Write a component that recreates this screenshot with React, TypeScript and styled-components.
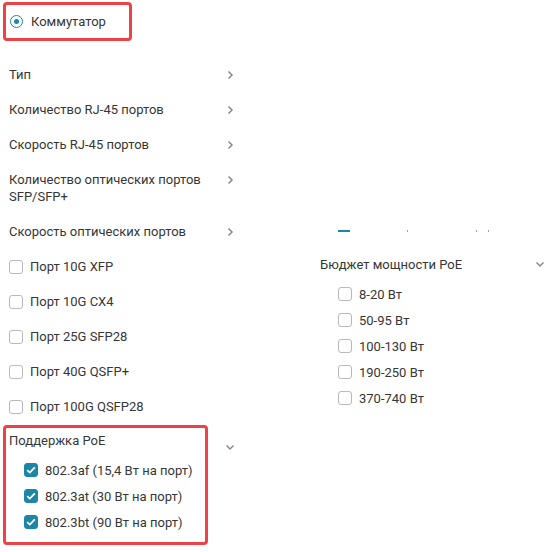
import React from "react";
import styled, { createGlobalStyle } from "styled-components";

const Global = createGlobalStyle`
  html, body { margin: 0; padding: 0; background: #fff; }
  body { font-family: Roboto, "Liberation Sans", Arial, sans-serif; color: #363636; font-size: 13px; }
  * { box-sizing: border-box; }
`;

const TEAL = "#1c87a5";
const RED = "#ee4346";

const Page = styled.div`
  display: flex;
  align-items: flex-start;
  width: 558px;
  height: 552px;
  overflow: hidden;
`;

const LeftCol = styled.div`
  width: 240px;
  padding: 2px 0 0 3px;
  display: flex;
  flex-direction: column;
`;

const RightCol = styled.div`
  margin-left: 80px;
  width: 228px;
  padding-top: 230px;
  display: flex;
  flex-direction: column;
`;

const Highlight = styled.div<{ $w: number }>`
  width: ${(p) => p.$w}px;
  border: 3px solid ${RED};
  border-radius: 4px;
`;

const RadioRow = styled.label`
  display: flex;
  align-items: center;
  gap: 8px;
  height: 33px;
  padding-left: 4px;
  line-height: 17px;
`;

const Radio = styled.span`
  width: 13px;
  height: 13px;
  border-radius: 50%;
  border: 1.5px solid ${TEAL};
  display: flex;
  align-items: center;
  justify-content: center;
  &::after {
    content: "";
    width: 5px;
    height: 5px;
    border-radius: 50%;
    background: ${TEAL};
  }
`;

const List = styled.div<{ $mt?: number }>`
  display: flex;
  flex-direction: column;
  margin-top: ${(p) => p.$mt ?? 0}px;
  padding-left: 6px;
`;

const Row = styled.div`
  display: flex;
  justify-content: space-between;
  align-items: flex-start;
  padding: 9px 0;
  line-height: 17px;
  width: 227px;
`;

const Label = styled.span<{ $max?: number }>`
  max-width: ${(p) => p.$max ?? 220}px;
`;

const ChevronBox = styled.span`
  width: 12px;
  height: 17px;
  display: flex;
  align-items: center;
  justify-content: center;
  flex-shrink: 0;
`;

const CheckRow = styled.label<{ $pad: number; $gap: number }>`
  display: flex;
  align-items: center;
  gap: ${(p) => p.$gap}px;
  padding: ${(p) => p.$pad}px 0;
  line-height: 17px;
`;

const Box = styled.span<{ $checked?: boolean }>`
  width: 14px;
  height: 14px;
  border-radius: 3px;
  border: 1px solid ${(p) => (p.$checked ? TEAL : "#b9b9b9")};
  background: ${(p) => (p.$checked ? TEAL : "#fff")};
  display: flex;
  align-items: center;
  justify-content: center;
  flex-shrink: 0;
`;

const Section = styled.div`
  display: flex;
  align-items: flex-start;
  margin-top: 1px;
`;

const SectionHead = styled.div`
  display: flex;
  justify-content: space-between;
  align-items: center;
  line-height: 17px;
`;

const HeadTitle = styled.div`
  padding: 4px 0 0 3px;
  line-height: 17px;
`;

const Sub = styled.div<{ $indent: number; $mt: number; $pb?: number }>`
  display: flex;
  flex-direction: column;
  padding-left: ${(p) => p.$indent}px;
  margin-top: ${(p) => p.$mt}px;
  padding-bottom: ${(p) => p.$pb ?? 0}px;
`;

const SideChevron = styled.span`
  margin: 19px 0 0 16px;
  width: 12px;
  display: flex;
  justify-content: center;
`;

const Strip = styled.div`
  display: flex;
  align-items: center;
  height: 2px;
  padding-left: 18px;
`;

const Dash = styled.span`
  width: 12px;
  height: 2px;
  background: ${TEAL};
`;

const Dot = styled.span<{ $ml: number }>`
  width: 1px;
  height: 2px;
  margin-left: ${(p) => p.$ml}px;
  background: #9aa4aa;
`;

const RightHead = styled(SectionHead)`
  margin-top: 24px;
  padding-right: 2px;
`;

const ChevronRight = () => (
  <svg width="7" height="10" viewBox="0 0 7 10">
    <path d="M1.5 1.5 L5 5 L1.5 8.5" fill="none" stroke="#8a8a8a" strokeWidth="1.5" />
  </svg>
);

const ChevronDown = () => (
  <svg width="10" height="7" viewBox="0 0 10 7">
    <path d="M1.5 1.5 L5 5 L8.5 1.5" fill="none" stroke="#8a8a8a" strokeWidth="1.5" />
  </svg>
);

const Check = () => (
  <svg width="10" height="8" viewBox="0 0 10 8">
    <path d="M1.2 4.2 L3.8 6.6 L8.8 1.4" fill="none" stroke="#fff" strokeWidth="1.8" />
  </svg>
);

const nav = [
  { t: "Тип" },
  { t: "Количество RJ-45 портов" },
  { t: "Скорость RJ-45 портов" },
  { t: "Количество оптических портов SFP/SFP+", max: 200 },
  { t: "Скорость оптических портов" },
];

const ports = ["Порт 10G XFP", "Порт 10G CX4", "Порт 25G SFP28", "Порт 40G QSFP+", "Порт 100G QSFP28"];
const poe = ["802.3af (15,4 Вт на порт)", "802.3at (30 Вт на порт)", "802.3bt (90 Вт на порт)"];
const budget = ["8-20 Вт", "50-95 Вт", "100-130 Вт", "190-250 Вт", "370-740 Вт"];

export default function App() {
  return (
    <>
      <Global />
      <Page>
        <LeftCol>
          <Highlight $w={129}>
            <RadioRow>
              <Radio />
              Коммутатор
            </RadioRow>
          </Highlight>
          <List $mt={16}>
            {nav.map((n) => (
              <Row key={n.t}>
                <Label $max={n.max}>{n.t}</Label>
                <ChevronBox>
                  <ChevronRight />
                </ChevronBox>
              </Row>
            ))}
            {ports.map((p) => (
              <CheckRow key={p} $pad={9} $gap={7}>
                <Box />
                {p}
              </CheckRow>
            ))}
          </List>
          <Section>
            <Highlight $w={205}>
              <HeadTitle>Поддержка PoE</HeadTitle>
              <Sub $indent={18} $mt={8} $pb={7}>
                {poe.map((p) => (
                  <CheckRow key={p} $pad={4.5} $gap={7}>
                    <Box $checked>
                      <Check />
                    </Box>
                    {p}
                  </CheckRow>
                ))}
              </Sub>
            </Highlight>
            <SideChevron>
              <ChevronDown />
            </SideChevron>
          </Section>
        </LeftCol>
        <RightCol>
          <Strip>
            <Dash />
            <Dot $ml={57} />
            <Dot $ml={68} />
            <Dot $ml={11} />
          </Strip>
          <RightHead>
            <span>Бюджет мощности PoE</span>
            <ChevronBox>
              <ChevronDown />
            </ChevronBox>
          </RightHead>
          <Sub $indent={18} $mt={8}>
            {budget.map((b) => (
              <CheckRow key={b} $pad={4.5} $gap={7}>
                <Box />
                {b}
              </CheckRow>
            ))}
          </Sub>
        </RightCol>
      </Page>
    </>
  );
}
